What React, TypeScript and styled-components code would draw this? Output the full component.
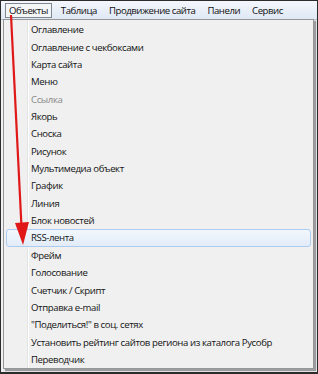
import styled, { createGlobalStyle } from "styled-components";

const Global = createGlobalStyle`
  html, body {
    margin: 0;
    padding: 0;
    background: #ffffff;
  }
  body {
    font-family: "Open Sans", "Noto Sans", sans-serif;
  }
`;

const Frame = styled.div`
  position: relative;
  width: 318px;
  height: 374px;
  box-sizing: border-box;
  border: 1px solid #2b2b2b;
  border-bottom-width: 2px;
  background: #e4e7ea;
  overflow: hidden;
  display: flex;
  flex-direction: column;
`;

const MenuBar = styled.div`
  height: 18px;
  display: flex;
  align-items: center;
  padding: 0 0 0 4px;
  background: linear-gradient(#f4f7fc, #dfe8f5);
  border-bottom: 1px solid #b6bcc6;
`;

const BarItem = styled.div<{ $open?: boolean }>`
  height: 15px;
  display: flex;
  align-items: center;
  padding: 0 ${(p) => (p.$open ? "3px" : "4px")};
  margin-right: ${(p) => (p.$open ? "4px" : "2px")};
  font-size: 9.6px;
  letter-spacing: -0.45px;
  white-space: nowrap;
  color: #111;
  box-sizing: border-box;
  border: 1px solid ${(p) => (p.$open ? "#7f8791" : "transparent")};
  background: ${(p) => (p.$open ? "#f4f5f7" : "transparent")};
`;

const Content = styled.div`
  flex: 1;
  background: #eef0f2;
`;

const Dropdown = styled.div`
  position: absolute;
  left: 2px;
  top: 18px;
  width: 311px;
  height: 350px;
  box-sizing: border-box;
  padding: 1px 2px;
  background: #f0f0f0;
  border: 1px solid #979797;
  box-shadow: 2px 2px 1px rgba(0, 0, 0, 0.35);
  display: flex;
  flex-direction: column;
  background-image: linear-gradient(
    to right,
    transparent 23px,
    #e2e3e3 23px,
    #e2e3e3 24px,
    #ffffff 24px,
    #ffffff 25px,
    transparent 25px
  );
`;

const Item = styled.div<{ $disabled?: boolean; $active?: boolean }>`
  height: 17.37px;
  flex: none;
  box-sizing: border-box;
  display: flex;
  align-items: center;
  padding-left: 24px;
  font-size: 9.6px;
  letter-spacing: -0.4px;
  white-space: nowrap;
  color: ${(p) => (p.$disabled ? "#8a8a8a" : "#141414")};
  border: 1px solid ${(p) => (p.$active ? "#aeccef" : "transparent")};
  border-radius: 3px;
  background: ${(p) =>
    p.$active ? "linear-gradient(#f2f7fd, #e2ecf8)" : "transparent"};
`;

const Arrow = styled.svg`
  position: absolute;
  left: 0;
  top: 0;
  pointer-events: none;
`;

const items = [
  "Оглавление",
  "Оглавление с чекбоксами",
  "Карта сайта",
  "Меню",
  "Ссылка",
  "Якорь",
  "Сноска",
  "Рисунок",
  "Мультимедиа объект",
  "График",
  "Линия",
  "Блок новостей",
  "RSS-лента",
  "Фрейм",
  "Голосование",
  "Счетчик / Скрипт",
  "Отправка e-mail",
  "\"Поделиться!\" в соц. сетях",
  "Установить рейтинг сайтов региона из каталога Русобр",
  "Переводчик",
];

const App = () => {
  return (
    <Frame>
      <Global />
      <MenuBar>
        <BarItem $open>Объекты</BarItem>
        <BarItem>Таблица</BarItem>
        <BarItem>Продвижение сайта</BarItem>
        <BarItem>Панели</BarItem>
        <BarItem>Сервис</BarItem>
      </MenuBar>
      <Content />
      <Dropdown>
        {items.map((t) => (
          <Item key={t} $disabled={t === "Ссылка"} $active={t === "RSS-лента"}>
            {t}
          </Item>
        ))}
      </Dropdown>
      <Arrow width="318" height="374">
        <line x1="10" y1="14" x2="20.5" y2="226" stroke="#e01818" strokeWidth="2.2" />
        <polygon points="14,222 28,221 22,244" fill="#e01818" />
      </Arrow>
    </Frame>
  );
};

export default App;
